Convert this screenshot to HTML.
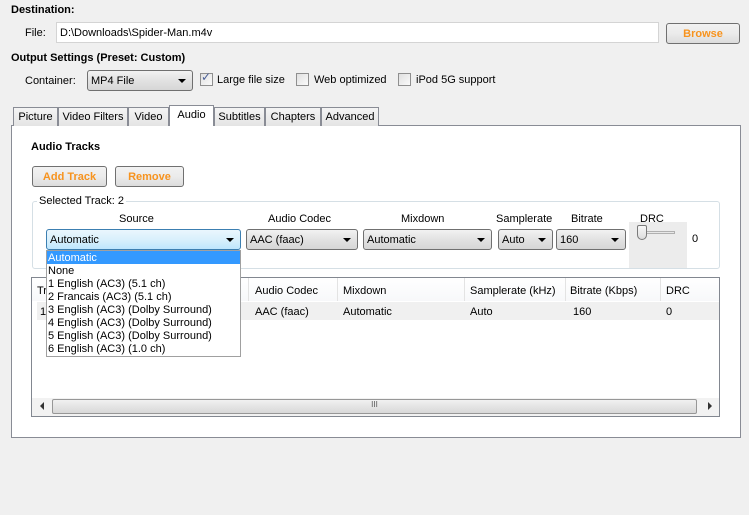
<!DOCTYPE html>
<html><head><meta charset="utf-8"><style>
*{box-sizing:border-box;margin:0;padding:0}
body{width:749px;height:515px;background:#f0f0f0;font:11px "Liberation Sans",sans-serif;color:#000;position:relative;overflow:hidden}
.a{position:absolute;white-space:nowrap}
.b{font-weight:bold}
.sel{position:absolute;height:21px;border:1px solid #707070;border-radius:3px;background:linear-gradient(#f2f2f2,#e2e2e2 50%,#d6d6d6);padding:4px 0 0 3px}
.sel:after{content:"";position:absolute;right:6px;top:8px;border-left:4px solid transparent;border-right:4px solid transparent;border-top:4px solid #000}
.btn{position:absolute;height:21px;border:1px solid #707070;border-radius:3px;background:linear-gradient(#f2f2f2,#ebebeb 50%,#dcdcdc);color:#f7931e;font-weight:bold;text-align:center;padding-top:4px}
.cb{position:absolute;width:13px;height:13px;border:1px solid #8f8f8f;background:linear-gradient(135deg,#e0e0e0,#fafafa)}
.tab{position:absolute;top:107px;height:19px;border:1px solid #898c95;border-bottom:none;background:linear-gradient(#f4f4f4,#e4e4e4);text-align:center;padding-top:3px}
.th{position:absolute;top:285px}
.sep{position:absolute;top:278px;width:1px;height:23px;background:#e3e3e3}
</style></head><body>
<div class="a b" style="left:11px;top:4px">Destination:</div>
<div class="a" style="left:25px;top:27px">File:</div>
<div class="a" style="left:56px;top:22px;width:603px;height:21px;background:#fff;border:1px solid #d4d4d4;padding:4px 0 0 3px">D:\Downloads\Spider-Man.m4v</div>
<div class="btn" style="left:666px;top:23px;width:74px">Browse</div>
<div class="a b" style="left:11px;top:52px">Output Settings (Preset: Custom)</div>
<div class="a" style="left:25px;top:75px">Container:</div>
<div class="sel" style="left:87px;top:70px;width:106px">MP4 File</div>
<div class="cb" style="left:200px;top:73px"></div><div class="a" style="left:201px;top:70px;font-size:12px;color:#4a5f97">✓</div>
<div class="a" style="left:217px;top:74px">Large file size</div>
<div class="cb" style="left:296px;top:73px"></div><div class="a" style="left:314px;top:74px">Web optimized</div>
<div class="cb" style="left:398px;top:73px"></div><div class="a" style="left:416px;top:74px">iPod 5G support</div>

<div class="a" style="left:11px;top:125px;width:730px;height:313px;background:#fff;border:1px solid #898c95"></div>
<div class="tab" style="left:13px;width:45px">Picture</div>
<div class="tab" style="left:58px;width:70px">Video Filters</div>
<div class="tab" style="left:128px;width:41px">Video</div>
<div class="tab" style="left:169px;top:105px;height:21px;width:45px;background:#fff;padding-top:3px">Audio</div>
<div class="a" style="left:170px;top:125px;width:43px;height:2px;background:#fff"></div>
<div class="tab" style="left:214px;width:51px">Subtitles</div>
<div class="tab" style="left:265px;width:56px">Chapters</div>
<div class="tab" style="left:321px;width:58px">Advanced</div>

<div class="a b" style="left:31px;top:141px">Audio Tracks</div>
<div class="btn" style="left:32px;top:166px;width:75px">Add Track</div>
<div class="btn" style="left:115px;top:166px;width:69px">Remove</div>

<div class="a" style="left:32px;top:201px;width:688px;height:68px;border:1px solid #d5dfe5;border-radius:3px"></div>
<div class="a" style="left:37px;top:195px;background:#fff;padding:0 2px">Selected Track: 2</div>
<div class="a" style="left:119px;top:213px">Source</div>
<div class="a" style="left:268px;top:213px">Audio Codec</div>
<div class="a" style="left:401px;top:213px">Mixdown</div>
<div class="a" style="left:496px;top:213px">Samplerate</div>
<div class="a" style="left:571px;top:213px">Bitrate</div>
<div class="a" style="left:640px;top:213px">DRC</div>
<div class="sel" style="left:46px;top:229px;width:195px;border-color:#3c7fb1;background:linear-gradient(#eaf6fd,#d9f0fc 50%,#bee6fd)">Automatic</div>
<div class="sel" style="left:246px;top:229px;width:112px">AAC (faac)</div>
<div class="sel" style="left:363px;top:229px;width:129px">Automatic</div>
<div class="sel" style="left:498px;top:229px;width:55px">Auto</div>
<div class="sel" style="left:556px;top:229px;width:70px">160</div>
<div class="a" style="left:629px;top:222px;width:58px;height:46px;background:#ececec"></div>
<div class="a" style="left:637px;top:231px;width:38px;height:3px;border:1px solid #b0b0b0;background:#e8e8e8"></div>
<div class="a" style="left:637px;top:225px;width:10px;height:15px;border:1px solid #7a7a7a;border-radius:2px 2px 5px 5px;background:linear-gradient(#f8f8f8,#dcdcdc)"></div>
<div class="a" style="left:692px;top:233px">0</div>

<div class="a" style="left:31px;top:277px;width:689px;height:140px;border:1px solid #828790;background:#fff"></div>
<div class="a" style="left:32px;top:278px;width:687px;height:23px;background:linear-gradient(#fff,#f7f8fa)"></div>
<div class="sep" style="left:248px"></div><div class="sep" style="left:337px"></div><div class="sep" style="left:464px"></div><div class="sep" style="left:565px"></div><div class="sep" style="left:660px"></div>
<div class="th" style="left:37px">Track</div>
<div class="th" style="left:255px">Audio Codec</div><div class="th" style="left:343px">Mixdown</div><div class="th" style="left:470px">Samplerate (kHz)</div><div class="th" style="left:570px">Bitrate (Kbps)</div><div class="th" style="left:666px">DRC</div>
<div class="a" style="left:37px;top:302px;width:682px;height:18px;background:#f0f0f0"></div>
<div class="a" style="left:40px;top:306px">1</div>
<div class="a" style="left:255px;top:306px">AAC (faac)</div><div class="a" style="left:343px;top:306px">Automatic</div><div class="a" style="left:470px;top:306px">Auto</div><div class="a" style="left:573px;top:306px">160</div><div class="a" style="left:666px;top:306px">0</div>
<div class="a" style="left:32px;top:398px;width:687px;height:18px;background:#f2f2f2"></div>
<div class="a" style="left:52px;top:399px;width:645px;height:15px;border:1px solid #979797;border-radius:2px;background:linear-gradient(#f1f1f1,#d8d8d8);text-align:center;font-size:8px;color:#555">III</div>
<div class="a" style="left:40px;top:402px;border-top:4px solid transparent;border-bottom:4px solid transparent;border-right:4px solid #333"></div>
<div class="a" style="left:708px;top:402px;border-top:4px solid transparent;border-bottom:4px solid transparent;border-left:4px solid #333"></div>

<div class="a" style="left:46px;top:250px;width:195px;height:107px;background:#fff;border:1px solid #a0a0a0"></div>
<div class="a" style="left:47px;top:251px;width:193px;height:13px;background:#3399ff"></div>
<div class="a" style="left:48px;top:252px;color:#fff;line-height:13px">Automatic</div>
<div class="a" style="left:48px;top:265px;line-height:13px">None<br>1 English (AC3) (5.1 ch)<br>2 Francais (AC3) (5.1 ch)<br>3 English (AC3) (Dolby Surround)<br>4 English (AC3) (Dolby Surround)<br>5 English (AC3) (Dolby Surround)<br>6 English (AC3) (1.0 ch)</div>
</body></html>
